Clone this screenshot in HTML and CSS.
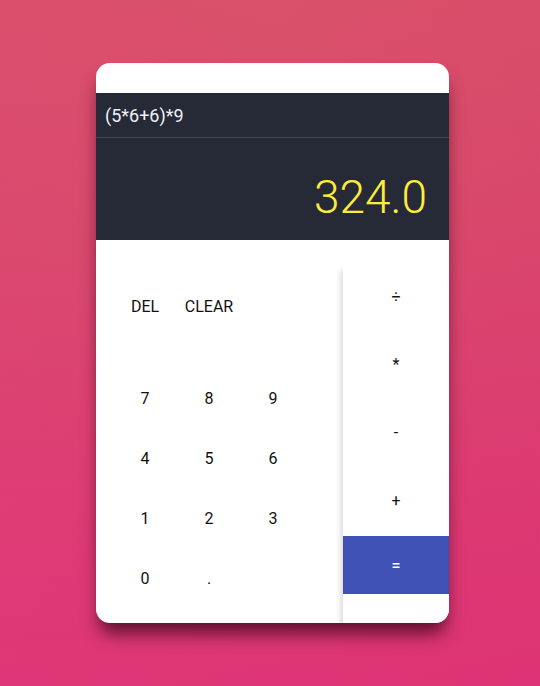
FILE: index.html
```html
<!DOCTYPE html>
<html>
<head>
<meta charset="utf-8">
<link rel="stylesheet" href="styles.css">
</head>
<body>
<div class="card">
  <div class="top-strip"></div>
  <div class="display">
    <div class="expression">(5*6+6)*9</div>
    <div class="result"><span>324.0</span></div>
  </div>
  <div class="keys">
    <div class="numpad">
      <div class="fn-row">
        <div class="key">DEL</div>
        <div class="key">CLEAR</div>
      </div>
      <div class="digits">
        <div class="key">7</div><div class="key">8</div><div class="key">9</div>
        <div class="key">4</div><div class="key">5</div><div class="key">6</div>
        <div class="key">1</div><div class="key">2</div><div class="key">3</div>
        <div class="key">0</div><div class="key">.</div><div class="key"></div>
      </div>
    </div>
    <div class="ops">
      <div class="op">÷</div>
      <div class="op">*</div>
      <div class="op">-</div>
      <div class="op">+</div>
      <div class="op equals">=</div>
    </div>
  </div>
</div>
</body>
</html>
```
FILE: styles.css
```css
html, body {
  margin: 0;
  padding: 0;
}
body {
  width: 540px;
  height: 686px;
  overflow: hidden;
  background:
    linear-gradient(90deg, rgba(230, 60, 130, 0.12) 0%, rgba(230, 60, 130, 0) 50%, rgba(210, 40, 90, 0.08) 100%),
    linear-gradient(175deg, #d9526a 0%, #d94a6c 35%, #dd3a74 75%, #df3476 100%);
  font-family: Roboto, "Liberation Sans", sans-serif;
  padding-top: 63px;
  box-sizing: border-box;
}
.card {
  margin-left: 96px;
  width: 353px;
  height: 560px;
  background: #fff;
  border-radius: 14px;
  overflow: hidden;
  box-shadow: 0 14px 18px -4px rgba(45, 0, 18, 0.75);
  display: flex;
  flex-direction: column;
}
.top-strip {
  height: 30px;
}
.display {
  background: #262936;
  height: 147px;
  display: flex;
  flex-direction: column;
}
.expression {
  height: 43px;
  border-bottom: 1px solid #444754;
  color: #eef0f6;
  font-size: 18px;
  display: flex;
  align-items: center;
  padding-left: 9px;
  padding-top: 1px;
  box-sizing: content-box;
}
.result {
  flex: 1;
  display: flex;
  justify-content: flex-end;
  align-items: flex-end;
  padding-right: 22px;
  padding-bottom: 20px;
}
.result span {
  color: #ffeb3b;
  font-size: 46px;
  font-weight: 300;
  line-height: 1;
}
.keys {
  flex: 1;
  display: flex;
}
.numpad {
  width: 247px;
  padding-top: 36px;
  padding-left: 17px;
  box-sizing: border-box;
}
.key {
  width: 64px;
  height: 60px;
  display: flex;
  align-items: center;
  justify-content: center;
  font-size: 16px;
  color: #111;
}
.fn-row {
  display: flex;
  margin-bottom: 32px;
}
.digits {
  display: grid;
  grid-template-columns: repeat(3, 64px);
}
.ops {
  width: 106px;
  margin-top: 22px;
  background: #fff;
  box-shadow: -4px 6px 6px -2px rgba(0, 0, 0, 0.16);
  display: flex;
  flex-direction: column;
}
.op {
  height: 68px;
  display: flex;
  align-items: center;
  justify-content: center;
  font-size: 16px;
  color: #111;
}
.op.equals {
  height: 58px;
  margin-top: 2px;
  background: #3f51b5;
  color: #fff;
  font-weight: 500;
}
```
